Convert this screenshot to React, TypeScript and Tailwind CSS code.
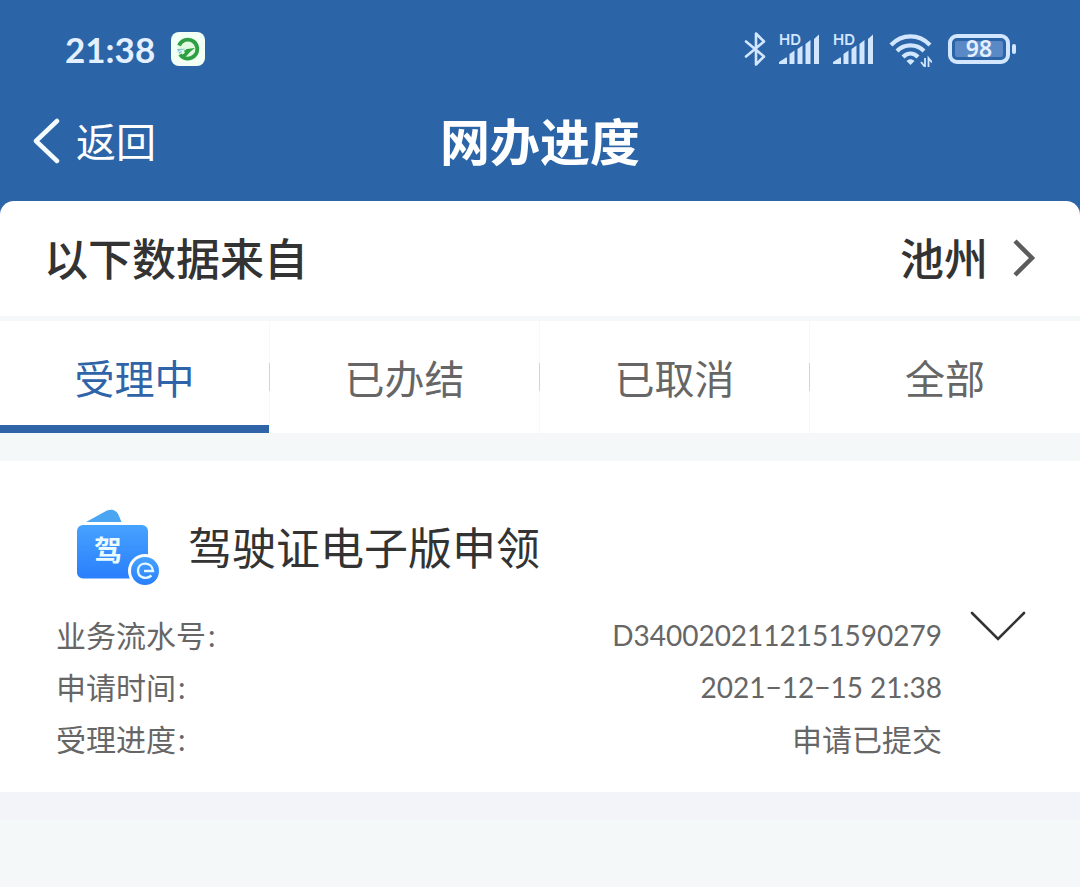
import { useState } from "react";

const TABS = ["受理中", "已办结", "已取消", "全部"];

const DETAILS = [
  { label: "业务流水号", value: "D3400202112151590279", numeric: true },
  { label: "申请时间", value: "2021−12−15 21:38", numeric: true },
  { label: "受理进度", value: "申请已提交", numeric: false },
];

function AppBadge() {
  return (
    <svg className="h-[34px] w-[34px]" viewBox="0 0 34 34" aria-hidden="true">
      <rect width="34" height="34" rx="8" fill="#f1fff5" />
      <circle cx="17" cy="17" r="11" fill="#e2fadf" />
      <path d="M8 13.500 A9.500 9.500 0 1 1 9 22.500" fill="none" stroke="#2ea043" strokeWidth="3.800" />
      <path d="M12 17.500 L24 16 L19.500 19.500 L13 26.500 L9 25 L14 20.500 Z" fill="#2ea043" />
      <path d="M6 17 L14 16.800 L8.500 22 Z" fill="#7cc4d2" />
      <path d="M7.500 19.500 L15 17.500" stroke="#ffffff" strokeWidth="1" />
    </svg>
  );
}

function BluetoothIcon() {
  return (
    <svg className="h-9 w-[22px]" viewBox="0 0 22 36" fill="none" stroke="#d3e6ff" strokeWidth="2.6" strokeLinejoin="round" strokeLinecap="round" aria-hidden="true">
      <path d="M2 10.500 L20 25.500 L12 33.500 V2.500 L20 10.500 L2 25.500" />
    </svg>
  );
}

function SignalIcon() {
  return (
    <svg className="h-9 w-[42px]" viewBox="0 0 42 36" fill="#d3e6ff" aria-hidden="true">
      <text x="1" y="14" fontFamily="Inter, sans-serif" fontWeight="600" fontSize="15">HD</text>
      <path d="M1 33 V31 L8 26.500 H9 V33 Z" />
      <path d="M11.500 33 V23 L16.500 19.500 V33 Z" />
      <path d="M19.500 33 V18 L24.500 14.500 V33 Z" />
      <path d="M27.500 33 V13 L32.500 9 V33 Z" />
      <path d="M36 33 V8 L41 3.500 V33 Z" />
    </svg>
  );
}

function WifiIcon() {
  return (
    <svg className="h-9 w-11" viewBox="0 0 44 36" fill="none" stroke="#d3e6ff" aria-hidden="true">
      <path d="M3 14 C14 2.500 31 2.500 42 14" strokeWidth="4.200" />
      <path d="M9 20 C16.500 12.500 28.500 12.500 36 20" strokeWidth="4.200" />
      <path d="M15 26 C19.500 21.500 25.500 21.500 30 26" strokeWidth="4.200" />
      <path d="M18.500 30 C21 27.500 24 27.500 26.500 30 L22.500 34 Z" fill="#d3e6ff" stroke="none" />
      <path d="M37 27 V36 L33 31 M40.500 36 V27 L44 31.500" strokeWidth="1.800" />
    </svg>
  );
}

function BatteryIcon() {
  return (
    <svg className="h-[30px] w-[68px]" viewBox="0 0 68 30" role="img" aria-label="98%">
      <rect x="2" y="2" width="58" height="26" rx="7" fill="none" stroke="#d3e6ff" strokeWidth="4" />
      <rect x="7" y="7" width="48" height="16" rx="2" fill="#5a89c6" />
      <rect x="64" y="10" width="4" height="10" rx="2" fill="#d3e6ff" />
      <text x="31" y="23" textAnchor="middle" fontFamily="'Noto Sans', sans-serif" fontWeight="600" fontSize="23" fill="#e4f0ff">98</text>
    </svg>
  );
}

function LicenseIcon() {
  return (
    <svg className="h-[78px] w-[84px]" viewBox="0 0 84 78" aria-hidden="true">
      <defs>
        <linearGradient id="wallet" x1="0" y1="0" x2="0" y2="1">
          <stop offset="0" stopColor="#46a2ff" />
          <stop offset="1" stopColor="#2a7ffb" />
        </linearGradient>
      </defs>
      <path d="M10 13 L31 1.500 C37 -0.500 41 2 43 7 L45.500 13 Z" fill="#4aa5f3" />
      <rect x="1" y="16" width="71" height="53.500" rx="6" fill="url(#wallet)" />
      <text x="32" y="52" textAnchor="middle" fontFamily="'Noto Sans CJK SC', sans-serif" fontWeight="700" fontSize="28" fill="#ecfbff">驾</text>
      <circle cx="69" cy="62" r="17" fill="#ffffff" />
      <circle cx="69" cy="62" r="14" fill="url(#wallet)" />
      <path d="M68 62 H77 C76 52 62 52.500 62 61.500 C62 69.500 71 70.500 75.500 66.500" fill="none" stroke="#e3f8ff" strokeWidth="2.400" />
    </svg>
  );
}

export default function App() {
  const [active, setActive] = useState(0);
  const [open, setOpen] = useState(true);

  return (
    <div className="min-h-screen bg-[#f4f8f9] font-[Lato,'Noto_Sans_CJK_SC',sans-serif] text-[#333333]">
      <header className="bg-[#2b65a8] text-white">
        <div className="flex h-[98px] items-center justify-between pr-16 pl-[65px]">
          <div className="flex items-center gap-4">
            <span className="text-[35px] leading-none font-bold text-[#e4f0ff]">21:38</span>
            <AppBadge />
          </div>
          <div className="flex items-center gap-3">
            <BluetoothIcon />
            <SignalIcon />
            <SignalIcon />
            <div className="flex items-center gap-4 pl-0.5">
              <WifiIcon />
              <BatteryIcon />
            </div>
          </div>
        </div>
        <div className="grid h-[103px] grid-cols-[1fr_auto_1fr] items-center px-8 pb-4">
          <button type="button" className="flex items-center gap-4 justify-self-start text-[40px] leading-none">
            <svg className="h-12 w-7" viewBox="0 0 28 48" fill="none" stroke="#f4fbff" strokeWidth="4.500" strokeLinecap="round" strokeLinejoin="round" aria-hidden="true">
              <path d="M25 3 L4 23 L25 43" />
            </svg>
            返回
          </button>
          <h1 className="text-[50px] leading-none font-bold">网办进度</h1>
        </div>
      </header>

      <main>
        <div className="bg-[#2b65a8]">
          <button type="button" className="flex h-[115px] w-full items-center justify-between rounded-t-[14px] bg-white px-11 text-[44px] leading-none font-medium">
            <span>以下数据来自</span>
            <span className="flex items-center gap-6">
              池州
              <svg className="h-10 w-6" viewBox="0 0 24 40" fill="none" stroke="#5c5c5c" strokeWidth="4.500" aria-hidden="true">
                <path d="M3 2 L20 19 L3 36" />
              </svg>
            </span>
          </button>
        </div>

        <div role="tablist" className="mt-[5px] grid grid-cols-4 bg-white">
          {TABS.map((tab, i) => (
            <button
              key={tab}
              type="button"
              role="tab"
              aria-selected={i === active}
              onClick={() => setActive(i)}
              className={"flex h-28 items-stretch text-[40px] leading-none " + (i === active ? "text-[#2f64a8]" : "text-[#666666]")}
            >
              <span
                className={
                  "flex flex-1 items-center justify-center border-b-8 pt-3 " +
                  (i === active ? "border-[#2f64a8]" : "border-white")
                }
              >
                {tab}
              </span>
              {i < TABS.length - 1 && (
                <span className="flex w-px items-center bg-[#f6f8f9]">
                  <span className="h-7 w-px bg-[#d2d4d6]" />
                </span>
              )}
            </button>
          ))}
        </div>

        <article className="mt-7 border-b-[28px] border-[#f3f4f9] bg-white">
          <div className="flex items-center gap-7 px-[76px] pt-12">
            <LicenseIcon />
            <h2 className="text-[44px] leading-none">驾驶证电子版申领</h2>
          </div>
          <div className="flex items-start gap-7 pt-[22px] pr-[54px] pb-[27px] pl-14">
            <dl className="flex-1 text-[30px] leading-[52px] text-[#666666]">
              {DETAILS.map((row) => (
                <div key={row.label} className="flex justify-between">
                  <dt className="flex gap-0.5">
                    {row.label}
                    <span>:</span>
                  </dt>
                  <dd className={row.numeric ? "text-[28px]" : "text-[30px]"}>{row.value}</dd>
                </div>
              ))}
            </dl>
            <button type="button" aria-label="展开详情" aria-expanded={open} onClick={() => setOpen(!open)}>
              <svg className="h-8 w-14" viewBox="0 0 56 32" fill="none" stroke="#333333" strokeWidth="2.600" strokeLinecap="round" aria-hidden="true">
                <path d="M2 4 L28 30 L54 4" />
              </svg>
            </button>
          </div>
        </article>
      </main>
    </div>
  );
}
